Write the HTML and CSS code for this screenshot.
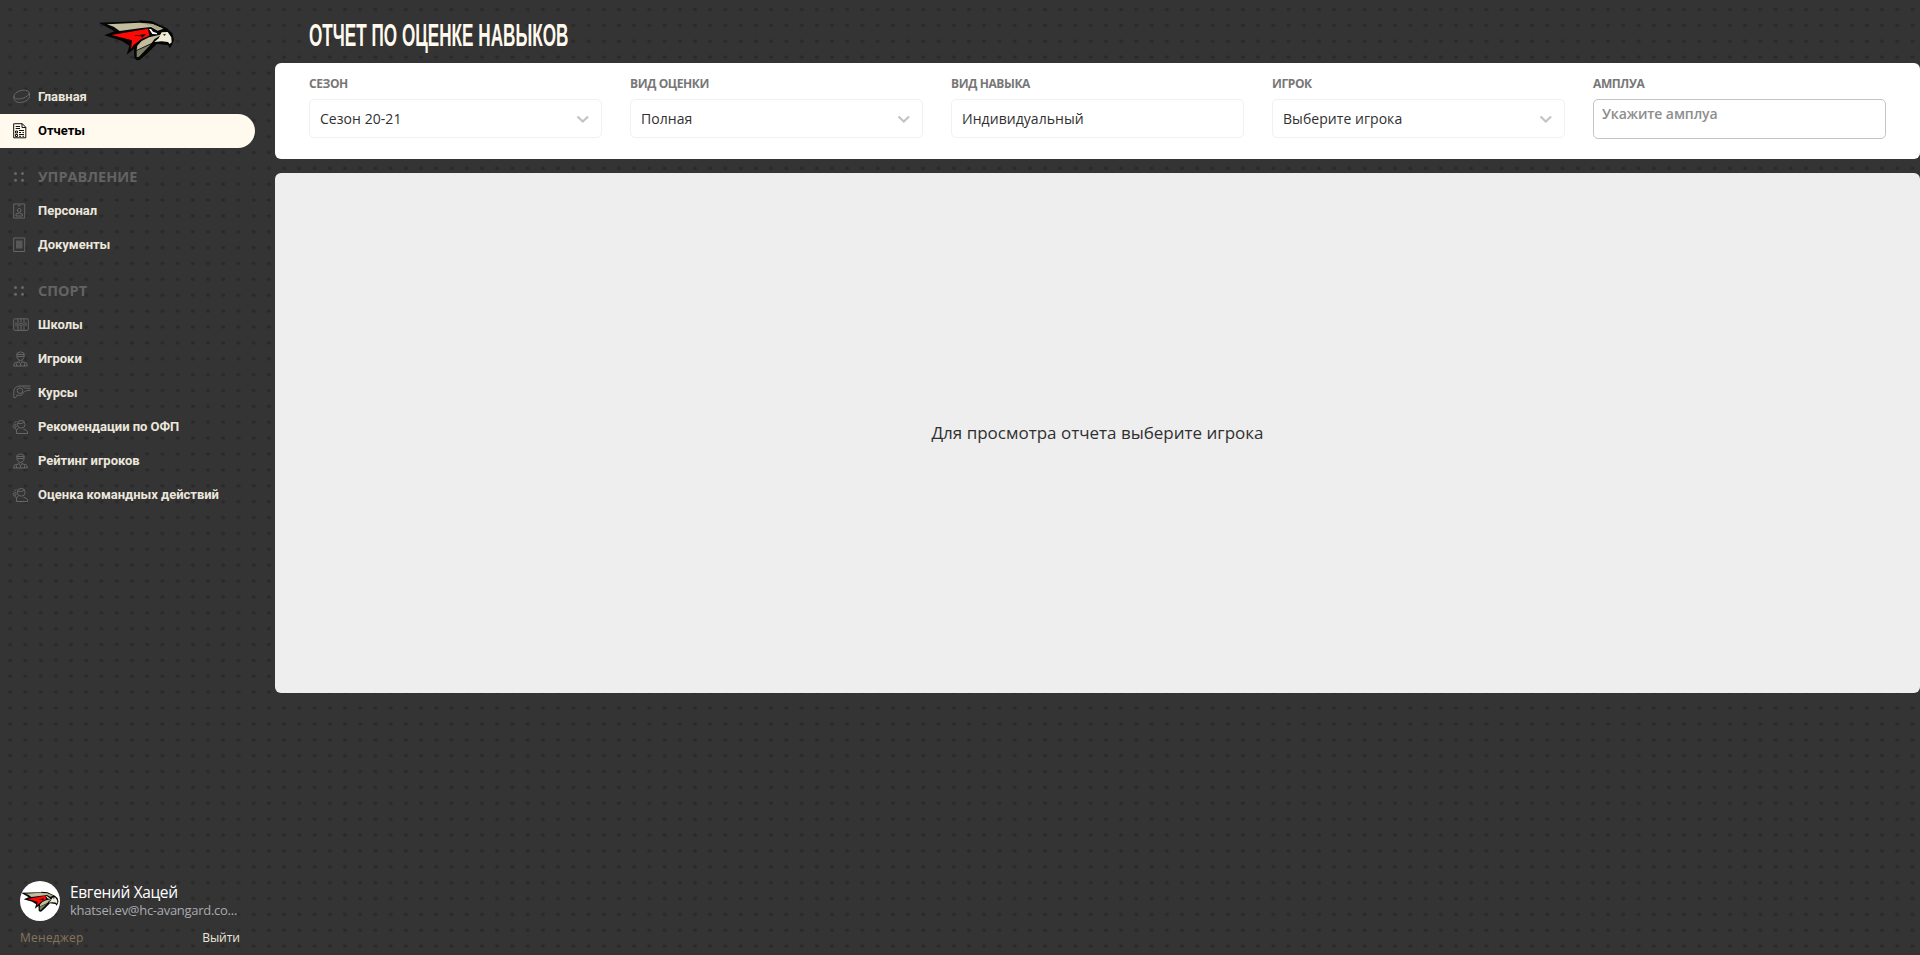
FILE: index.html
```html
<!DOCTYPE html>
<html lang="ru">
<head>
<meta charset="utf-8">
<title>Отчет по оценке навыков</title>
<link rel="stylesheet" href="styles.css">
</head>
<body>
<svg class="defs" width="0" height="0">
  <symbol id="hawk" viewBox="28 27 228 126">
    <path d="M28 38 85 36 148 34 150 31 187 34 212 46 232 55 248 70 253 90 247 106 240 115 235 105 223 104 202 101 172 131 150 150 142 151 134 145 133 117 111 134 119 107 95 92 44 76 74 64Z" fill="#050505"/>
    <path d="M52 43 150 38 188 42 221 56 204 62 184 51 150 55 90 63 72 50Z" fill="#c2bd9d"/>
    <path d="M150 39 188 42 219 55 203 59 183 47Z" fill="#aaa38d"/>
    <path d="M66 75 175 56 179 77 154 88 131 106 124 117 127 91Z" fill="#fe0905"/>
    <path d="M132 77 169 72 157 84 154 79Z" fill="#050505"/>
    <path d="M139 78 154 75 152 77Z" fill="#fe0905"/>
    <path d="M156 93 178 82 218 73 194 88 186 99 141 120 143 107Z" fill="#c2bd9d"/>
    <path d="M141 122 184 103 148 140 141 142Z" fill="#7c7f63"/>
    <path d="M178 57 188 72 203 73 201 69 190 65 184 57Z" fill="#fff"/>
    <path d="M216 67 234 66 245 82 246 97 240 102 235 96 216 94 194 96 207 85Z" fill="#eeecd7"/>
    <path d="M219 74 229 71 225 77Z" fill="#050505"/>
  </symbol>
  <symbol id="player" viewBox="0 0 15 16">
    <path d="M4 2.200Q7.500-.4 11 2.200v4.500Q7.500 12.500 4 6.700zM3.500 3.500h8M4 5.500h7M6 9.500v1.300L1.500 12l-.9 3h13.800l-.9-3L9 10.800V9.500M3.500 12.500V15m8-2.500V15M6 11l1.500 1.800L9 11M7.500 13v2"/>
  </symbol>
  <symbol id="coach" viewBox="0 0 17 16">
    <circle cx="9.200" cy="5.300" r="3.900"/>
    <path d="M5.500 4.200q4 1.200 7.200-1M6.500 8.700 4.500 11 2.500 9M4.500 14.500h11.200q0-2.500-1.700-3.300l-2.500-1M4.500 14.500V11M4.500 6 2.500 5.300.9 7.200l1.600 2 1.700-1.700-1.700-.5M2.200 4.500 4.500 2"/>
  </symbol>
  <symbol id="dots" viewBox="0 0 12 12">
    <g fill="#686868" stroke="none"><circle cx="2.500" cy="2.500" r="1.500"/><circle cx="9.500" cy="2.500" r="1.500"/><circle cx="2.500" cy="9.300" r="1.500"/><circle cx="9.500" cy="9.300" r="1.500"/></g>
  </symbol>
</svg>
<div class="layout">
  <aside class="sidebar">
    <svg class="logo"><use href="#hawk"/></svg>
    <nav class="nav">
      <a class="item"><svg class="icon up" width="18" height="15" viewBox="0 0 18 15"><path d="M1 7C1 2.500 13-1.500 16 3.200 17.500 8 4 12.500 1 8.500zM1 7v3.200c2 5.800 14.500 3.300 15.500-2.500V4"/></svg><span>Главная</span></a>
      <a class="item active"><svg class="icon" width="14" height="16" viewBox="0 0 14 16"><path d="M1.500.7h7.800l3.500 3.600v10.500H.7V.7zM9 .7v3.800h3.800M2.700 3.500H7M2.700 5.500H7M2.500 8h2v2h-2zM2.500 11.500h2v2h-2zM6 7.500h5M6 9.500h2m1.500 0H11M6 11.500h5M6 13.300h2m1.500 0H11"/></svg><span>Отчеты</span></a>
      <h2 class="group"><svg class="icon" width="12" height="12"><use href="#dots"/></svg><span>УПРАВЛЕНИЕ</span></h2>
      <a class="item"><svg class="icon" width="13" height="16" viewBox="0 0 13 16"><path d="M.7 1h11v14H.7zM5 2.700h2.500M4.500 6.300q1.700-1.800 3.400 0v2q-1.700 2-3.400 0zM3 13v-2q3.300-2 6.500 0v2z"/></svg><span>Персонал</span></a>
      <a class="item"><svg class="icon" width="13" height="16" viewBox="0 0 13 16"><path d="M.7 1h11v13.500H.7z"/><path d="M3 3.500h6.500v8H3z" fill="#585858" stroke="none"/></svg><span>Документы</span></a>
      <h2 class="group"><svg class="icon" width="12" height="12"><use href="#dots"/></svg><span>СПОРТ</span></h2>
      <a class="item"><svg class="icon" width="16" height="14" viewBox="0 0 16 14"><path d="M2 .8h12q1.300 0 1.300 1.300v9q0 1.300-1.300 1.300H2Q.7 12.400.7 11.100v-9Q.7.8 2 .8zM5 1v11.400M11 1v11.400M8 1v3.500M8 8.500v3.900M3 4.500v4m10-4v4"/><circle cx="8" cy="6.500" r="1.400"/></svg><span>Школы</span></a>
      <a class="item"><svg class="icon" width="15" height="16"><use href="#player"/></svg><span>Игроки</span></a>
      <a class="item"><svg class="icon up" width="18" height="14" viewBox="0 0 18 14"><path d="M17.500 1H7Q1 1.500.8 6v6.500q2.700 1 3-2.300 5.500 1.300 7.700-4L17.500 5M10 1.500l1.500 1.700h6"/><circle cx="7" cy="5.700" r="2.800"/></svg><span>Курсы</span></a>
      <a class="item"><svg class="icon coach" width="17" height="16"><use href="#coach"/></svg><span>Рекомендации по ОФП</span></a>
      <a class="item"><svg class="icon" width="15" height="16"><use href="#player"/></svg><span>Рейтинг игроков</span></a>
      <a class="item"><svg class="icon coach" width="17" height="16"><use href="#coach"/></svg><span>Оценка командных действий</span></a>
    </nav>
    <footer class="user">
      <div class="profile">
        <div class="avatar"><svg width="38" height="21"><use href="#hawk"/></svg></div>
        <div class="who"><div class="name">Евгений Хацей</div><div class="mail">khatsei.ev@hc-avangard.co...</div></div>
      </div>
      <div class="account"><span class="role">Менеджер</span><a class="exit">Выйти</a></div>
    </footer>
  </aside>
  <main class="main">
    <h1 class="title"><span>ОТЧЕТ ПО ОЦЕНКЕ НАВЫКОВ</span></h1>
    <section class="filters">
      <div class="field"><label>СЕЗОН</label><div class="select"><span>Сезон 20-21</span><svg class="chev" viewBox="0 0 14 9"><path d="m1.500 1.500 5.300 5 5.300-5"/></svg></div></div>
      <div class="field"><label>ВИД ОЦЕНКИ</label><div class="select"><span>Полная</span><svg class="chev" viewBox="0 0 14 9"><path d="m1.500 1.500 5.300 5 5.300-5"/></svg></div></div>
      <div class="field"><label>ВИД НАВЫКА</label><div class="select"><span>Индивидуальный</span></div></div>
      <div class="field"><label>ИГРОК</label><div class="select"><span>Выберите игрока</span><svg class="chev" viewBox="0 0 14 9"><path d="m1.500 1.500 5.300 5 5.300-5"/></svg></div></div>
      <div class="field"><label>АМПЛУА</label><div class="multi"><span>Укажите амплуа</span></div></div>
    </section>
    <section class="report"><p>Для просмотра отчета выберите игрока</p></section>
  </main>
</div>
</body>
</html>
```
FILE: styles.css
```css
* { box-sizing: border-box; }
body {
  margin: 0;
  font-family: "Open Sans", "Noto Sans", sans-serif;
  background-color: #343434;
  background-image: radial-gradient(ellipse 2.7px 2.1px at center, #292929 0 45%, transparent 100%);
  background-size: 15.22px 15.885px;
  background-position: 2.6px 1.6px;
}
.defs { position: absolute; }
.layout { display: flex; height: 955px; overflow: hidden; }
.sidebar { width: 275px; flex: none; display: flex; flex-direction: column; }
.logo { width: 76px; height: 42px; margin: 19px 0 0 99px; flex: none; }
.nav { padding-top: 19px; }
.item, .group {
  display: grid;
  grid-template-columns: 26px 1fr;
  align-items: center;
  height: 34px;
  margin: 0;
  padding-left: 12px;
  white-space: nowrap;
}
.item { font-family: Roboto, sans-serif; font-size: 13px; font-weight: 700; letter-spacing: -.02px; color: #ece7dc; }
.item span { padding-bottom: 2px; }
.icon { display: block; margin-left: 1px; fill: none; stroke: #666; stroke-width: 1; }
.up { margin-top: -2px; }
.coach { margin-left: 0; }
.active { width: 255px; background: #fff9ee; border-radius: 0 17px 17px 0; color: #000; }
.active .icon { stroke: #111; }
.group { margin-top: 12px; font-size: 14.5px; font-weight: 700; color: #636363; }
.group span { padding-bottom: 2px; }
.user { margin-top: auto; padding: 0 35px 7px 20px; }
.profile { display: flex; gap: 10px; }
.avatar { width: 40px; height: 40px; border-radius: 50%; background: #fff; display: flex; align-items: center; justify-content: center; flex: none; }
.who { white-space: nowrap; }
.name { font-size: 15.5px; letter-spacing: -.35px; line-height: 23px; color: #fff; }
.mail { font-size: 13px; letter-spacing: -.28px; line-height: 12px; color: #a9abb1; }
.account { display: flex; justify-content: space-between; font-size: 12px; line-height: 20px; margin-top: 7px; }
.role { color: #85745a; letter-spacing: .25px; }
.exit { color: #ece7dc; }
.main { flex: 1; min-width: 0; }
.title { height: 63px; margin: 0; padding: 12px 0 0 34px; font-family: "Liberation Sans", sans-serif; font-weight: 700; font-size: 30.5px; line-height: 46px; color: #fff9ee; white-space: nowrap; }
.title span { display: inline-block; transform: scaleX(.562); transform-origin: left; }
.filters { display: grid; grid-template-columns: repeat(5, 1fr); gap: 28px; height: 96px; padding: 12px 34px 0; background: #fff; border-radius: 6px; }
.field label { display: block; height: 24px; font-size: 12px; letter-spacing: -.4px; line-height: 17px; font-weight: 700; color: #777; }
.select, .multi { display: flex; border-radius: 5px; white-space: nowrap; }
.select { height: 39px; align-items: center; justify-content: space-between; padding: 0 11px 0 10px; border: 1px solid #f1f1f1; font-size: 14px; letter-spacing: .05px; color: #303030; }
.chev { width: 14px; height: 9px; margin-top: 2px; fill: none; stroke: #c3c3c3; stroke-width: 2.2; }
.multi { height: 40px; padding: 4px 8px; border: 1px solid #c4c4c4; font-size: 14px; line-height: 20px; font-weight: 600; letter-spacing: -.1px; color: #8e8e8e; }
.report { margin-top: 14px; height: 520px; background: #eee; border-radius: 6px; display: flex; align-items: center; justify-content: center; }
.report p { margin: 0 0 2px; font-size: 17px; color: #303030; }
```
